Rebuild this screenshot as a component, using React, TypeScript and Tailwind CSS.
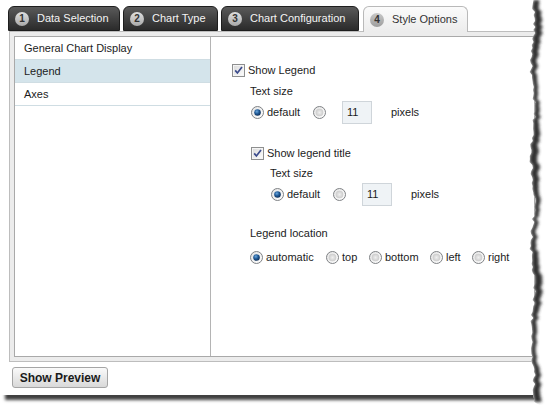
import type { ReactNode } from "react";

const tabs = [
  { n: 1, label: "Data Selection", w: "w-[112px]" },
  { n: 2, label: "Chart Type", w: "w-[95px]" },
  { n: 3, label: "Chart Configuration", w: "w-[138px]" },
];

function Radio({ checked = false }: { checked?: boolean }) {
  return (
    <svg width="13" height="13" viewBox="0 0 13 13" className="shrink-0">
      <defs>
        <linearGradient id="rOuter" x1="0" y1="0" x2="1" y2="1">
          <stop offset="0" stopColor="#e4e4e4" />
          <stop offset="1" stopColor="#ffffff" />
        </linearGradient>
        <radialGradient id="rDot" cx="0.4" cy="0.35" r="0.7">
          <stop offset="0" stopColor="#6aa6dc" />
          <stop offset="0.5" stopColor="#1f5996" />
          <stop offset="1" stopColor="#0e2a50" />
        </radialGradient>
        <radialGradient id="rOff" cx="0.5" cy="0.5" r="0.6">
          <stop offset="0" stopColor="#f0f0f0" />
          <stop offset="1" stopColor="#c4c4c4" />
        </radialGradient>
      </defs>
      <circle cx="6.5" cy="6.5" r="6" fill="url(#rOuter)" stroke="#7f8285" strokeWidth="1" />
      {checked ? (
        <circle cx="6.5" cy="6.5" r="3.3" fill="url(#rDot)" />
      ) : (
        <circle cx="6.5" cy="6.5" r="3.8" fill="url(#rOff)" />
      )}
    </svg>
  );
}

function Checkbox() {
  return (
    <svg width="13" height="13" viewBox="0 0 13 13" className="shrink-0">
      <defs>
        <linearGradient id="cbIn" x1="0" y1="0" x2="1" y2="1">
          <stop offset="0" stopColor="#dcdcdc" />
          <stop offset="1" stopColor="#fbfbfb" />
        </linearGradient>
      </defs>
      <rect x="0.5" y="0.5" width="12" height="12" fill="#f5f5f5" stroke="#8e8f8f" />
      <rect x="2" y="2" width="9" height="9" fill="url(#cbIn)" />
      <path d="M3.2 6.4 L5.4 9 L10 3" fill="none" stroke="#3b4b8c" strokeWidth="1.7" />
    </svg>
  );
}

function PixelsRow({ className }: { className: string }) {
  return (
    <div className={`flex h-[23px] items-center ${className}`}>
      <Radio checked />
      <span className="ml-[3px] w-[46px]">default</span>
      <Radio />
      <div className="ml-[16px] flex h-[23px] w-[30px] items-center border border-[#cfd5da] bg-[#eff3f6] pl-[4px]">
        11
      </div>
      <span className="ml-[19px]">pixels</span>
    </div>
  );
}

function Opt({ label, w, checked = false }: { label: string; w: string; checked?: boolean }) {
  return (
    <div className="flex items-center">
      <Radio checked={checked} />
      <span className={`ml-[3px] ${w}`}>{label}</span>
    </div>
  );
}

function Tab({ n, children, w }: { n: number; children: ReactNode; w: string }) {
  return (
    <div
      className={`flex h-[25px] ${w} items-center rounded-t-[6px] border border-[#1e1e1e] bg-gradient-to-b from-[#5a5a5a] to-[#2b2b2b] pl-[6px] text-[#f4f4f4]`}
    >
      <span className="flex h-[14px] w-[14px] items-center justify-center rounded-full bg-gradient-to-b from-[#e0e0e0] to-[#a9a9a9] text-[10px] font-bold text-[#333]">
        {n}
      </span>
      <span className="ml-[8px]">{children}</span>
    </div>
  );
}

// rough torn paper edge, deterministic pseudo random
let seed = 17;
const rnd = () => {
  seed = (seed * 1103515245 + 12345) % 2147483648;
  return seed / 2147483648;
};
const jag = Array.from({ length: 135 }, (_, i) => {
  const x = 11 + 1.6 * Math.sin(i * 0.21) + rnd() * 3.2;
  return [x, i * 3] as const;
});

function TornEdge() {
  const edge = jag.map(([x, y]) => `${x.toFixed(1)},${y}`).join(" ");
  const back = [...jag]
    .reverse()
    .map(([x, y]) => `${(x + 6 + Math.sin(y * 0.05) * 1.5).toFixed(1)},${y}`)
    .join(" ");
  return (
    <svg width="30" height="411" viewBox="0 0 30 411" className="absolute left-[520px] top-0">
      <defs>
        <filter id="blur" x="-1" y="-1" width="3" height="3">
          <feGaussianBlur stdDeviation="1.4" />
        </filter>
        <clipPath id="rightSide">
          <polygon points={`30,0 ${edge} 30,411`} />
        </clipPath>
      </defs>
      <polygon points={`30,0 ${edge} 11,411 30,411`} fill="#ffffff" />
      <g clipPath="url(#rightSide)">
        <polygon points={`${edge} ${back}`} fill="#333333" filter="url(#blur)" />
      </g>
    </svg>
  );
}

export default function App() {
  return (
    <div className="relative h-[411px] w-[550px] overflow-hidden bg-white font-['Liberation_Sans',Arial,sans-serif] text-[11px] text-[#1c1c1c]">
      <div className="flex h-[395px] w-[540px] flex-col bg-white shadow-[5px_5px_3px_rgba(0,0,0,0.75)]">
        <div className="flex h-[31px] items-end gap-[3px] pl-[8px]">
          {tabs.map((t) => (
            <Tab key={t.n} n={t.n} w={t.w}>
              {t.label}
            </Tab>
          ))}
          <div className="relative z-10 -mb-px ml-px flex h-[26px] w-[105px] items-center rounded-t-[6px] border border-b-0 border-[#b9b9b9] bg-gradient-to-b from-[#fbfbfb] to-[#ececec] pl-[6px] text-[#333]">
            <span className="flex h-[14px] w-[14px] items-center justify-center rounded-full bg-gradient-to-b from-[#c9c9c9] to-[#9d9d9d] text-[10px] font-bold text-[#333]">
              4
            </span>
            <span className="ml-[8px]">Style Options</span>
          </div>
        </div>

        <div className="ml-[9px] h-[331px] border border-[#bdbdbd] bg-[#ececec] p-[4px]">
          <div className="flex h-full border border-[#a9a9a9] bg-white">
            <div className="w-[196px] shrink-0 border-r border-[#b4b4b4]">
              <div className="flex h-[23px] items-center border-b border-[#cfdde3] pl-[9px] pt-px">General Chart Display</div>
              <div className="flex h-[23px] items-center border-b border-[#cfdde3] bg-[#d4e4eb] pl-[9px] pt-px">Legend</div>
              <div className="flex h-[23px] items-center border-b border-[#cfdde3] pl-[9px] pt-px">Axes</div>
            </div>

            <div className="flex flex-col">
              <div className="ml-[21px] mt-[26px] flex h-[14px] items-center">
                <Checkbox />
                <span className="ml-[3px]">Show Legend</span>
              </div>
              <div className="ml-[39px] mt-[6px] flex h-[16px] items-center">Text size</div>
              <PixelsRow className="ml-[40px] mt-[2px]" />

              <div className="ml-[40px] mt-[22px] flex h-[14px] items-center">
                <Checkbox />
                <span className="ml-[3px]">Show legend title</span>
              </div>
              <div className="ml-[59px] mt-[5px] flex h-[16px] items-center">Text size</div>
              <PixelsRow className="ml-[60px] mt-[2px]" />

              <div className="ml-[39px] mt-[19px] flex h-[16px] items-center">Legend location</div>
              <div className="ml-[39px] mt-[9px] flex h-[14px] items-center">
                <Opt label="automatic" w="w-[60px]" checked />
                <Opt label="top" w="w-[27px]" />
                <Opt label="bottom" w="w-[45px]" />
                <Opt label="left" w="w-[26px]" />
                <Opt label="right" w="w-[30px]" />
              </div>
            </div>
          </div>
        </div>

        <div className="ml-[12px] mt-[5px] flex h-[21px] w-[96px] items-center justify-center rounded-[3px] border border-[#a5a5a5] bg-gradient-to-b from-[#fafafa] to-[#d9d9d9] text-[12px] font-bold text-[#1a1a1a]">
          Show Preview
        </div>
      </div>
      <TornEdge />
    </div>
  );
}
